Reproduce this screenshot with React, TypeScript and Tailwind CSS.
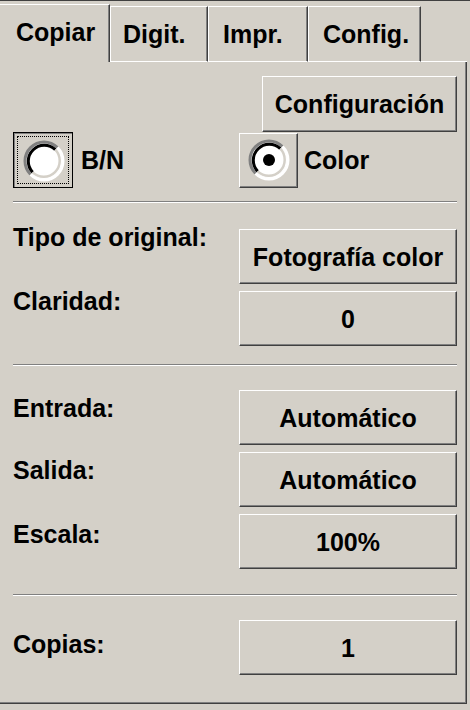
import React from 'react';

const raised = 'border-t border-l border-t-white border-l-white border-b border-r border-b-[#404040] border-r-[#404040] shadow-[inset_-1px_-1px_#808080]';

const RadioIcon = ({ checked }: { checked: boolean }) => (
  <svg width="42" height="42" viewBox="0 0 42 42">
    <circle cx="21" cy="21" r="18" fill="#ffffff" />
    <path d="M34.44 7.56 A19 19 0 0 0 7.56 34.44" fill="none" stroke="#808080" strokeWidth="3" />
    <path d="M7.56 34.44 A19 19 0 0 0 34.44 7.56" fill="none" stroke="#ffffff" strokeWidth="3" />
    <path d="M32.31 9.69 A16 16 0 0 0 9.69 32.31" fill="none" stroke="#000000" strokeWidth="3" />
    <path d="M9.69 32.31 A16 16 0 0 0 32.31 9.69" fill="none" stroke="#d4d0c8" strokeWidth="2.5" />
    {checked && <circle cx="21" cy="21" r="6" fill="#000000" />}
  </svg>
);

const Tab = ({ label, active, width, pad }: { label: string; active?: boolean; width: string; pad: string }) => (
  <div
    className={`${width} ${pad} pt-[15px] border-t border-t-white border-r border-r-[#404040] shadow-[inset_-1px_0_#808080] ${
      active ? 'h-[58px]' : 'h-[56px] border-l border-l-white border-b border-b-white'
    }`}
  >
    {label}
  </div>
);

const Row = ({ label, value, labelTop }: { label: string; value: string; labelTop: string }) => (
  <div className="flex items-start">
    <div className={`flex-1 ${labelTop}`}>{label}</div>
    <div className={`w-[218px] h-[55px] flex items-center justify-center ${raised}`}>{value}</div>
  </div>
);

const Separator = ({ className }: { className: string }) => (
  <div className={`h-[2px] border-t border-t-[#808080] border-b border-b-white ${className}`} />
);

export default function App() {
  return (
    <div className="w-[470px] h-[710px] bg-[#d4d0c8] text-black font-['Liberation_Sans',Arial,sans-serif] font-bold text-[25px] leading-[24px] select-none">
      <div className="h-px bg-[#404040]" />
      <div className="w-[467px]">
        {/* tab strip */}
        <div className="flex items-end h-[61px]">
          <Tab label="Copiar" active width="w-[110px]" pad="pl-[16px]" />
          <Tab label="Digit." width="w-[98px]" pad="pl-[12px]" />
          <Tab label="Impr." width="w-[100px]" pad="pl-[14px]" />
          <Tab label="Config." width="w-[113px]" pad="pl-[14px]" />
          <div className="flex-1 h-px bg-white" />
        </div>

        {/* panel */}
        <div className="h-[642px] pl-[13px] pr-[9px] border-r border-b border-[#404040] shadow-[inset_-1px_-1px_#808080]">
          <div className="flex justify-end pt-[14px]">
            <div className={`w-[195px] h-[56px] flex items-center justify-center ${raised}`}>Configuración</div>
          </div>

          <div className="flex items-center h-[56px]">
            <div className="w-[226px] flex items-center">
              <div className="w-[60px] h-[56px] border border-black shadow-[inset_1px_1px_#808080] p-[3px]">
                <div className="w-full h-full border border-dotted border-black flex items-center justify-center pl-[2px] pt-[2px]">
                  <RadioIcon checked={false} />
                </div>
              </div>
              <span className="ml-[8px]">B/N</span>
            </div>
            <div className="flex items-center">
              <div className={`w-[59px] h-[55px] flex items-center justify-center ${raised}`}>
                <RadioIcon checked />
              </div>
              <span className="ml-[6px]">Color</span>
            </div>
          </div>

          <Separator className="mt-[13px]" />

          <div className="mt-[26px] flex flex-col gap-[7px]">
            <Row label="Tipo de original:" value="Fotografía color" labelTop="-mt-[4px]" />
            <Row label="Claridad:" value="0" labelTop="-mt-[2px]" />
          </div>

          <Separator className="mt-[18px]" />

          <div className="mt-[24px] flex flex-col gap-[7px]">
            <Row label="Entrada:" value="Automático" labelTop="mt-[6px]" />
            <Row label="Salida:" value="Automático" labelTop="mt-[6px]" />
            <Row label="Escala:" value="100%" labelTop="mt-[8px]" />
          </div>

          <Separator className="mt-[25px]" />

          <div className="mt-[24px]">
            <Row label="Copias:" value="1" labelTop="mt-[12px]" />
          </div>
        </div>
      </div>
    </div>
  );
}
